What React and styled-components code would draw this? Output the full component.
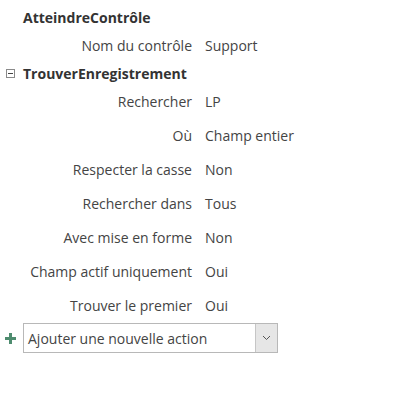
import React from "react";
import styled, { createGlobalStyle } from "styled-components";

const Global = createGlobalStyle`
  html, body { margin: 0; padding: 0; background: #ffffff; }
  body { font-family: "Open Sans", "Noto Sans", sans-serif; color: #444444; }
`;

const Page = styled.div`
  width: 405px;
  height: 410px;
  padding-top: 6px;
  box-sizing: border-box;
`;

const Header = styled.div`
  display: flex;
  align-items: center;
  height: 22px;
  font-size: 14px;
  font-weight: 700;
  color: #333333;
`;

const ToggleSlot = styled.div`
  width: 23px;
  display: flex;
  justify-content: flex-start;
  padding-left: 6px;
  box-sizing: border-box;
`;

const MinusBox = styled.span`
  width: 9px;
  height: 9px;
  border: 1px solid #8a8a8a;
  box-sizing: border-box;
  display: flex;
  align-items: center;
  justify-content: center;
  &::after {
    content: "";
    width: 5px;
    height: 1px;
    background: #444;
  }
`;

const ParamGrid = styled.div`
  display: grid;
  grid-template-columns: 192px 1fr;
  column-gap: 13px;
  grid-auto-rows: 34px;
  align-items: center;
  font-size: 14px;
`;

const Label = styled.div`
  text-align: right;
  white-space: nowrap;
  color: #444444;
`;

const Value = styled.div`
  color: #444444;
  white-space: nowrap;
`;

const AddRow = styled.div`
  display: flex;
  align-items: center;
  margin-top: 1px;
  height: 30px;
`;

const PlusSlot = styled.div`
  width: 23px;
  display: flex;
  padding-left: 5px;
  box-sizing: border-box;
`;

const Select = styled.div`
  width: 255px;
  height: 30px;
  border: 1px solid #b8b8b8;
  box-sizing: border-box;
  display: flex;
  align-items: stretch;
  background: #fff;
`;

const SelectText = styled.div`
  flex: 1;
  display: flex;
  align-items: center;
  padding-left: 4px;
  font-size: 14px;
  color: #444444;
`;

const SelectButton = styled.div`
  width: 21px;
  background: #e6e6e6;
  border-left: 1px solid #c6c6c6;
  display: flex;
  align-items: center;
  justify-content: center;
`;

const params1 = [["Nom du contrôle", "Support"]];
const params2 = [
  ["Rechercher", "LP"],
  ["Où", "Champ entier"],
  ["Respecter la casse", "Non"],
  ["Rechercher dans", "Tous"],
  ["Avec mise en forme", "Non"],
  ["Champ actif uniquement", "Oui"],
  ["Trouver le premier", "Oui"],
];

function Params({ items }) {
  return (
    <ParamGrid>
      {items.map(([l, v]) => (
        <React.Fragment key={l}>
          <Label>{l}</Label>
          <Value>{v}</Value>
        </React.Fragment>
      ))}
    </ParamGrid>
  );
}

export default function App() {
  return (
    <Page>
      <Global />
      <Header>
        <ToggleSlot />
        AtteindreContrôle
      </Header>
      <Params items={params1} />
      <Header>
        <ToggleSlot>
          <MinusBox />
        </ToggleSlot>
        TrouverEnregistrement
      </Header>
      <Params items={params2} />
      <AddRow>
        <PlusSlot>
          <svg width="11" height="11" viewBox="0 0 11 11">
            <rect x="4" y="0" width="3" height="11" fill="#4e8c6f" />
            <rect x="0" y="4" width="11" height="3" fill="#4e8c6f" />
          </svg>
        </PlusSlot>
        <Select>
          <SelectText>Ajouter une nouvelle action</SelectText>
          <SelectButton>
            <svg width="9" height="6" viewBox="0 0 9 6">
              <path d="M1 1 L4.5 4.5 L8 1" fill="none" stroke="#555" strokeWidth="1" />
            </svg>
          </SelectButton>
        </Select>
      </AddRow>
    </Page>
  );
}
